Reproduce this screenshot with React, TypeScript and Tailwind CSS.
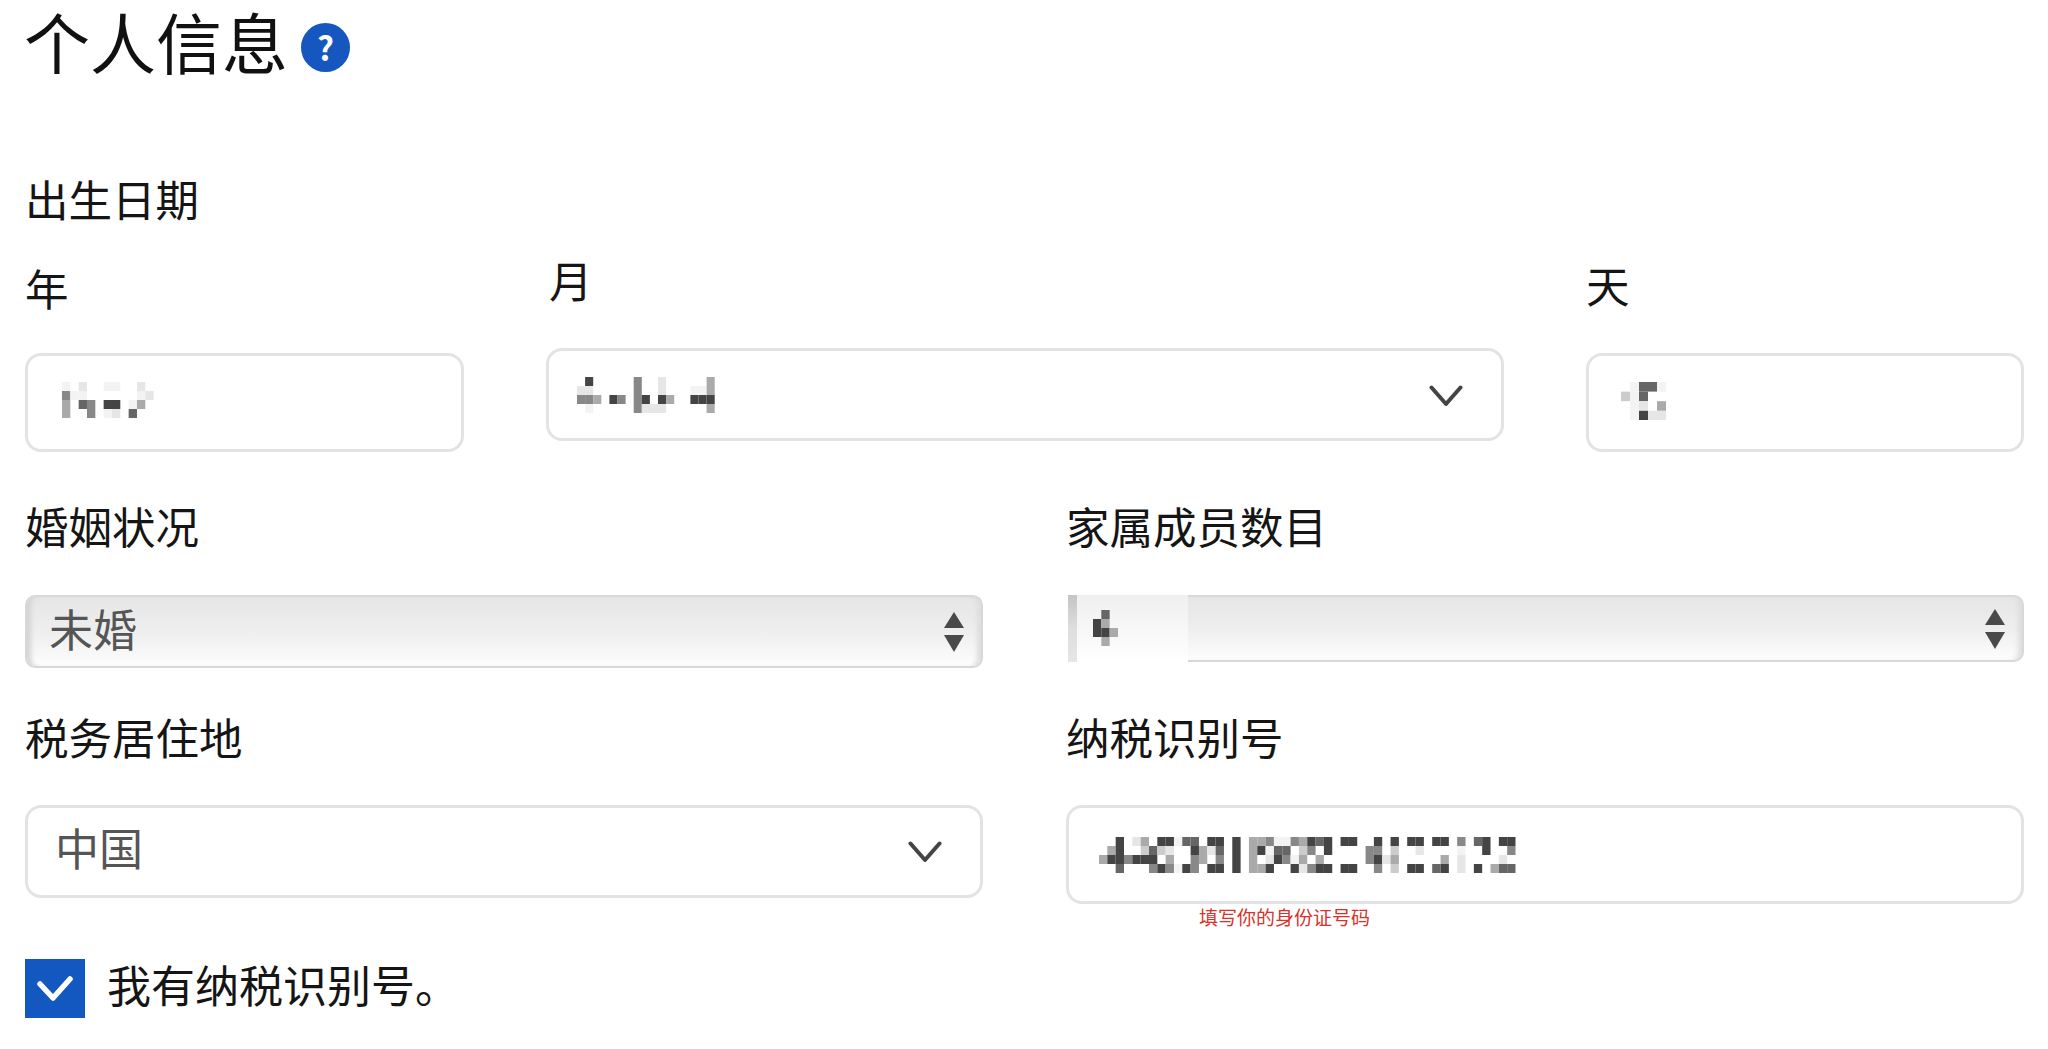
const shades: Record<string, string> = {
  a: '#444444',
  b: '#666666',
  c: '#888888',
  d: '#aaaaaa',
  e: '#cccccc',
  f: '#e6e6e6',
  g: '#f3f3f3',
};

// pixelated (redacted) values, one char per mosaic cell
const yearCells = ['g.f..gg..f.', 'cgg......gf', 'd.bc.aa.gd.', 'd..c.gf.b..'];
const monthCells = ['.a.....c..f.....d', 'ff.....c..f...ggd', 'ccd.ac.ca.ad..aaa', '.g.....cfff.....d'];
const dayCells = ['.gbbg', 'egb..', '.gf.d', '.gaff'];
const dependentsCells = ['.b.', 'ad.', 'aad', '.d.'];
const taxIdCells = [
  '..a.fd.aagbb.aa.a.ddcggcdaba.aa..a.a.aa.aa.c.ba.aa',
  '.da..ebef..adfb.a.dagbb.ec.a....cc.e..f....g..a..c',
  'daacaaa.d..cd.c.a.d.facgd.d.....cafd.....d.f....f.',
  '..b...cacgac.aa.a.dda..afcaa.aa..c.e.aa.ba.f.a.dbb',
];

function Mosaic({ cells, w = 8.33, h = 9 }: { cells: string[]; w?: number; h?: number }) {
  const cols = Math.max(...cells.map(r => r.length));
  return (
    <svg width={cols * w} height={cells.length * h} className="block shrink-0 blur-[0.5px]">
      {cells.map((row, y) =>
        row.split('').map((c, x) =>
          shades[c] ? <rect key={`${x}-${y}`} x={x * w} y={y * h} width={w} height={h} fill={shades[c]} /> : null
        )
      )}
    </svg>
  );
}

function Chevron() {
  return (
    <svg width="34" height="24" viewBox="0 0 34 24" fill="none" className="shrink-0">
      <path d="M2.5 3.5 L17 20 L31.5 3.5" stroke="#444444" strokeWidth="4" strokeLinecap="round" strokeLinejoin="round" />
    </svg>
  );
}

function Stepper() {
  return (
    <svg width="22" height="40" viewBox="0 0 22 40" className="shrink-0">
      <path d="M11 0 L21 16 L1 16 Z" fill="#4a4a4a" />
      <path d="M1 23 L21 23 L11 40 Z" fill="#4a4a4a" />
    </svg>
  );
}

function Label({ children, className = '' }: { children: string; className?: string }) {
  return <div className={`h-[44px] text-[43.5px] text-[#151515] ${className}`}>{children}</div>;
}

export default function App() {
  return (
    <div
      className="w-[2048px] h-[1049px] overflow-hidden bg-white pl-[25px] pr-[24px] pt-[6px]"
      style={{ fontFamily: '"Noto Sans CJK SC", "Liberation Sans", sans-serif' }}
    >
      <div className="flex items-center h-[68px]">
        <h1 className="-ml-[1px] text-[66px] leading-[68px] font-normal text-[#111111]">个人信息</h1>
        <span className="ml-[13px] mt-[15px] flex h-[49px] w-[49px] items-center justify-center rounded-full bg-[#1557bf] text-[33px] font-bold leading-none text-white">
          ?
        </span>
      </div>

      <Label className="mt-[104px] leading-[42px]">出生日期</Label>

      <div className="mt-[40px] flex items-start justify-between">
        <div className="w-[439px] pt-[6px]">
          <Label className="leading-[40px]">年</Label>
          <div className="mt-[41px] h-[99px] rounded-[16px] border-[3px] border-[#e3e3e3] pl-[34px] pt-[26px]">
            <Mosaic cells={yearCells} />
          </div>
        </div>
        <div className="w-[958px]">
          <Label className="pl-[3px] leading-[36px]">月</Label>
          <div className="mt-[42px] flex h-[93px] items-start justify-between rounded-[16px] border-[3px] border-[#e3e3e3] pl-[28px] pr-[38px]">
            <div className="pt-[26px]">
              <Mosaic cells={monthCells} w={8.1} />
            </div>
            <div className="pt-[33px]">
              <Chevron />
            </div>
          </div>
        </div>
        <div className="w-[438px] pt-[6px]">
          <Label className="leading-[34px]">天</Label>
          <div className="mt-[41px] h-[99px] rounded-[16px] border-[3px] border-[#e3e3e3] pl-[32px] pt-[26px]">
            <Mosaic cells={dayCells} w={9} h={9.6} />
          </div>
        </div>
      </div>

      <div className="mt-[56px] grid grid-cols-[958px_958px] justify-between">
        <div>
          <Label className="leading-[36px]">婚姻状况</Label>
          <div className="mt-[43px] flex h-[73px] items-center justify-between rounded-[10px] border-2 border-[#d8d8d8] bg-gradient-to-b from-[#e6e6e6] via-[#eeeeee] to-[#fdfdfd] pl-[22px] pr-[16px] shadow-[inset_7px_0_5px_-3px_#d4d4d4,inset_-7px_0_5px_-3px_#dddddd]">
            <span className="pb-[8px] text-[44px] leading-[44px] text-[#555555]">未婚</span>
            <Stepper />
          </div>
        </div>
        <div>
          <Label className="leading-[36px]">家属成员数目</Label>
          <div className="relative mt-[43px] flex h-[67px] items-center justify-end rounded-r-[10px] border-2 border-l-0 border-[#d8d8d8] bg-gradient-to-b from-[#e6e6e6] via-[#eeeeee] to-[#fdfdfd] pr-[16px] shadow-[inset_-7px_0_5px_-3px_#dddddd]">
            <Stepper />
            <div className="absolute left-0 -top-[2px] -bottom-[2px] w-[122px] bg-white pl-[2px]">
              <div className="flex h-full bg-gradient-to-b from-[#efefef] to-white">
                <div className="h-full w-[9px] bg-gradient-to-b from-[#c4c4c4] via-[#dedede] to-[#e6e6e6]" />
                <div className="ml-[16px] pt-[15px]">
                  <Mosaic cells={dependentsCells} />
                </div>
              </div>
            </div>
          </div>
        </div>
      </div>

      <div className="mt-[51px] grid grid-cols-[958px_958px] items-start justify-between">
        <div>
          <Label className="leading-[36px]">税务居住地</Label>
          <div className="mt-[42px] flex h-[93px] items-center justify-between rounded-[16px] border-[3px] border-[#e3e3e3] pl-[27px] pr-[38px]">
            <span className="pb-[10px] text-[44px] leading-[44px] text-[#555555]">中国</span>
            <Chevron />
          </div>
        </div>
        <div>
          <Label className="leading-[36px]">纳税识别号</Label>
          <div className="mt-[42px] h-[99px] rounded-[16px] border-[3px] border-[#e3e3e3] pl-[30px] pt-[29px]">
            <Mosaic cells={taxIdCells} />
          </div>
          <div className="mt-[3px] pl-[133px] text-[19px] leading-[20px] text-[#d9322a]">填写你的身份证号码</div>
        </div>
      </div>

      <div className="mt-[32px] flex items-center">
        <span className="flex h-[59px] w-[60px] items-center justify-center bg-[#1357c0]">
          <svg width="36" height="26" viewBox="0 0 36 26" fill="none">
            <path d="M3 8 L16 22 L33 3" stroke="white" strokeWidth="5.5" strokeLinecap="round" strokeLinejoin="round" />
          </svg>
        </span>
        <span className="ml-[22px] pb-[10px] text-[44px] leading-[44px] text-[#151515]">我有纳税识别号。</span>
      </div>
    </div>
  );
}
